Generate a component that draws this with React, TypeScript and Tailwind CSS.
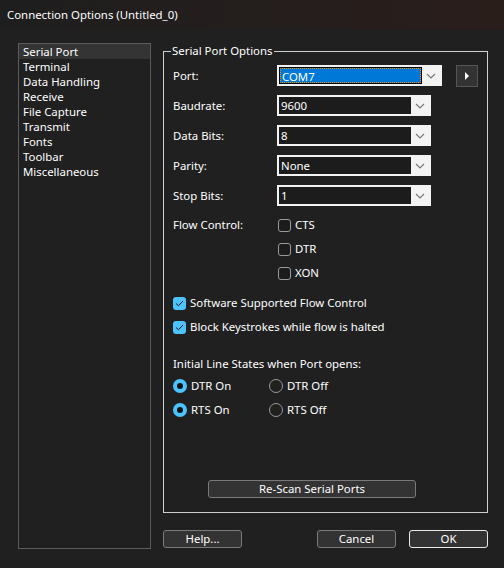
import React from "react";

const font = { fontFamily: '"Noto Sans", "Segoe UI", sans-serif' };

function Chevron() {
  return (
    <svg width="10" height="6" viewBox="0 0 10 6" className="block">
      <path d="M1 1 L5 5 L9 1" fill="none" stroke="#7a7a7a" strokeWidth="1.2" />
    </svg>
  );
}

function Combo({ value, w }: { value: string; w: string }) {
  return (
    <div className={`${w} h-[21px] bg-[#f3f3f3] p-[2px] flex`}>
      <div className="flex-1 bg-[#1c1c1c] text-white leading-[17px] pl-[2px]">{value}</div>
      <div className="w-[18px] flex items-center justify-center">
        <Chevron />
      </div>
    </div>
  );
}

function Check({ checked, label }: { checked?: boolean; label: string }) {
  return (
    <div className="flex items-center h-[24px]">
      {checked ? (
        <div className="w-[13px] h-[13px] rounded-[3px] bg-[#4cc2ff] flex items-center justify-center">
          <svg width="9" height="7" viewBox="0 0 9 7">
            <path d="M1 3.5 L3.4 5.8 L8 1" fill="none" stroke="#1a1a1a" strokeWidth="1" />
          </svg>
        </div>
      ) : (
        <div className="w-[13px] h-[13px] rounded-[3px] border border-[#9a9a9a] bg-[#1c1c1c]" />
      )}
      <span className="ml-[4px] text-white">{label}</span>
    </div>
  );
}

function Radio({ checked, label }: { checked?: boolean; label: string }) {
  return (
    <div className="flex items-center h-[24px]">
      {checked ? (
        <div className="w-[14px] h-[14px] rounded-full bg-[#4cc2ff] flex items-center justify-center">
          <div className="w-[6px] h-[6px] rounded-full bg-[#111]" />
        </div>
      ) : (
        <div className="w-[14px] h-[14px] rounded-full border border-[#9a9a9a]" />
      )}
      <span className="ml-[4px] text-white">{label}</span>
    </div>
  );
}

function Row({ label, children }: { label: string; children: React.ReactNode }) {
  return (
    <div className="flex items-center h-[21px]">
      <div className="w-[104px] text-white">{label}</div>
      {children}
    </div>
  );
}

function Btn({ label, def, w }: { label: string; def?: boolean; w: string }) {
  return (
    <div
      className={`${w} h-[18px] rounded-[3px] bg-[#333333] border ${
        def ? "border-[#e8e8e8]" : "border-[#7a7a7a]"
      } flex items-center justify-center text-white leading-none`}
    >
      {label}
    </div>
  );
}

export default function App() {
  const items = [
    "Serial Port",
    "Terminal",
    "Data Handling",
    "Receive",
    "File Capture",
    "Transmit",
    "Fonts",
    "Toolbar",
    "Miscellaneous",
  ];
  return (
    <div
      className="w-[504px] h-[568px] bg-[#202020] text-[11.4px] text-white overflow-hidden flex flex-col"
      style={font}
    >
      <div className="h-[29px] shrink-0 bg-linear-to-r from-[#1e1e1e] to-[#2a1e1b] flex items-center pl-[7px]">
        Connection Options (Untitled_0)
      </div>
      <div className="flex pl-[18px] pt-[14px]">
        <div className="w-[133px] h-[506px] border border-[#5c5c5c] bg-[#202020] flex flex-col">
          {items.map((it, i) => (
            <div
              key={it}
              className={`h-[15px] leading-[15px] pl-[4px] ${i === 0 ? "bg-[#343434]" : ""}`}
            >
              {it}
            </div>
          ))}
        </div>
        <div className="ml-[12px] w-[325px] flex flex-col">
          <fieldset className="border border-[#cfcfcf] h-[470px] px-[9px] pb-0">
            <legend className="px-[1px] ml-[-2px] leading-[16px] text-white">Serial Port Options</legend>
            <div className="flex flex-col">
              <div className="mt-[6px] flex flex-col gap-[9px]">
                <Row label="Port:">
                  <div className="w-[165px] h-[21px] bg-[#f3f3f3] p-[2px] flex">
                    <div className="flex-1 border border-black flex">
                      <div className="flex-1 border border-dotted border-[#ff8c00] bg-[#0078d7] text-white leading-[15px] pl-[1px]">
                        COM7
                      </div>
                    </div>
                    <div className="w-[18px] flex items-center justify-center">
                      <Chevron />
                    </div>
                  </div>
                  <div className="ml-[14px] w-[22px] h-[22px] bg-[#333333] border border-[#555555] flex items-center justify-center">
                    <svg width="4" height="8" viewBox="0 0 4 8">
                      <path d="M0 0 L4 4 L0 8 Z" fill="#ffffff" />
                    </svg>
                  </div>
                </Row>
                <Row label="Baudrate:">
                  <Combo value="9600" w="w-[154px]" />
                </Row>
                <Row label="Data Bits:">
                  <Combo value="8" w="w-[154px]" />
                </Row>
                <Row label="Parity:">
                  <Combo value="None" w="w-[154px]" />
                </Row>
                <Row label="Stop Bits:">
                  <Combo value="1" w="w-[154px]" />
                </Row>
              </div>
              <div className="mt-[7px] flex">
                <div className="w-[105px] h-[24px] leading-[24px]">Flow Control:</div>
                <div className="flex flex-col">
                  <Check label="CTS" />
                  <Check label="DTR" />
                  <Check label="XON" />
                </div>
              </div>
              <div className="mt-[6px] flex flex-col">
                <Check checked label="Software Supported Flow Control" />
                <Check checked label="Block Keystrokes while flow is halted" />
              </div>
              <div className="mt-[17px] h-[16px] leading-[16px]">Initial Line States when Port opens:</div>
              <div className="mt-[2px] flex">
                <div className="w-[96px] flex flex-col">
                  <Radio checked label="DTR On" />
                  <Radio checked label="RTS On" />
                </div>
                <div className="flex flex-col">
                  <Radio label="DTR Off" />
                  <Radio label="RTS Off" />
                </div>
              </div>
              <div className="mt-[58px] ml-[35px]">
                <Btn label="Re-Scan Serial Ports" w="w-[208px]" />
              </div>
            </div>
          </fieldset>
          <div className="mt-[17px] flex">
            <Btn label="Help..." w="w-[79px]" />
            <div className="ml-[75px]">
              <Btn label="Cancel" w="w-[79px]" />
            </div>
            <div className="ml-[13px]">
              <Btn label="OK" def w="w-[79px]" />
            </div>
          </div>
        </div>
      </div>
    </div>
  );
}
